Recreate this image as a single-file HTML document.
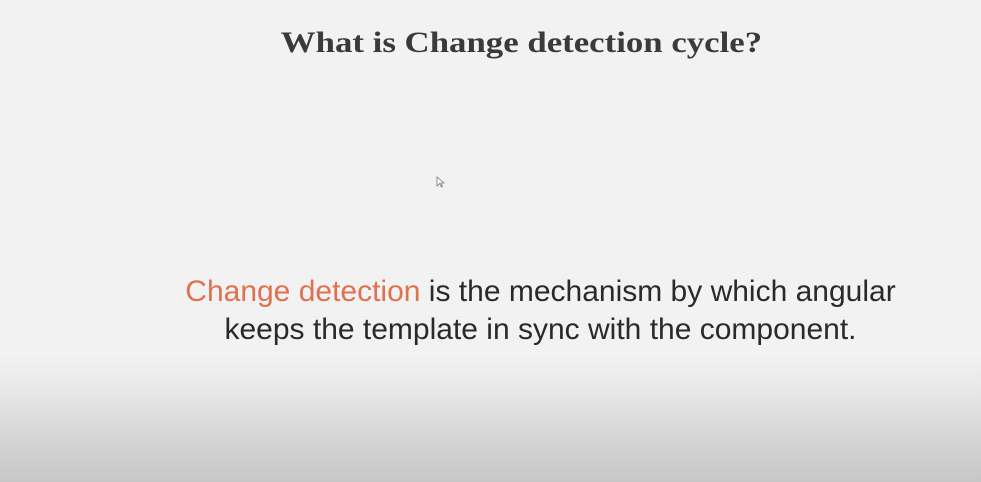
<!DOCTYPE html>
<html><head><style>
html,body{margin:0;padding:0}
body{width:981px;height:482px;overflow:hidden;position:relative;background:linear-gradient(#f2f2f2 0,#f2f2f2 355px,#e6e6e6 395px,#d4d4d4 440px,#c7c7c7 482px);font-family:"Liberation Sans",sans-serif}
.t{position:absolute;left:0;width:1042px;top:26px;text-align:center;font-family:"Liberation Serif",serif;font-weight:bold;font-size:30px;color:#3a3a3a;white-space:nowrap}
.t span{display:inline-block;transform:scaleX(1.16)}
.b{position:absolute;left:0;width:981px;text-align:center;font-size:30px;color:#2a2a2a;white-space:nowrap;line-height:38px}
.b span.in{display:inline-block;transform:scaleX(1.0);transform-origin:center}
.o{color:#e0714f}
</style></head><body>
<div class="t"><span>What is Change detection cycle?</span></div>
<div class="b" style="top:273px;left:99px;width:883px"><span class="in"><span class="o">Change detection</span> is the mechanism by which angular</span></div>
<div class="b" style="top:311px;left:99px;width:883px"><span class="in">keeps the template in sync with the component.</span></div>
<svg style="position:absolute;left:436px;top:176px" width="9" height="12" viewBox="0 0 9 12"><path d="M1 1 L1 10 L3.5 7.5 L5.5 11 L6.5 10.5 L4.8 7 L8 7 Z" fill="#fff" stroke="#777" stroke-width="0.8"/></svg>
</body></html>
